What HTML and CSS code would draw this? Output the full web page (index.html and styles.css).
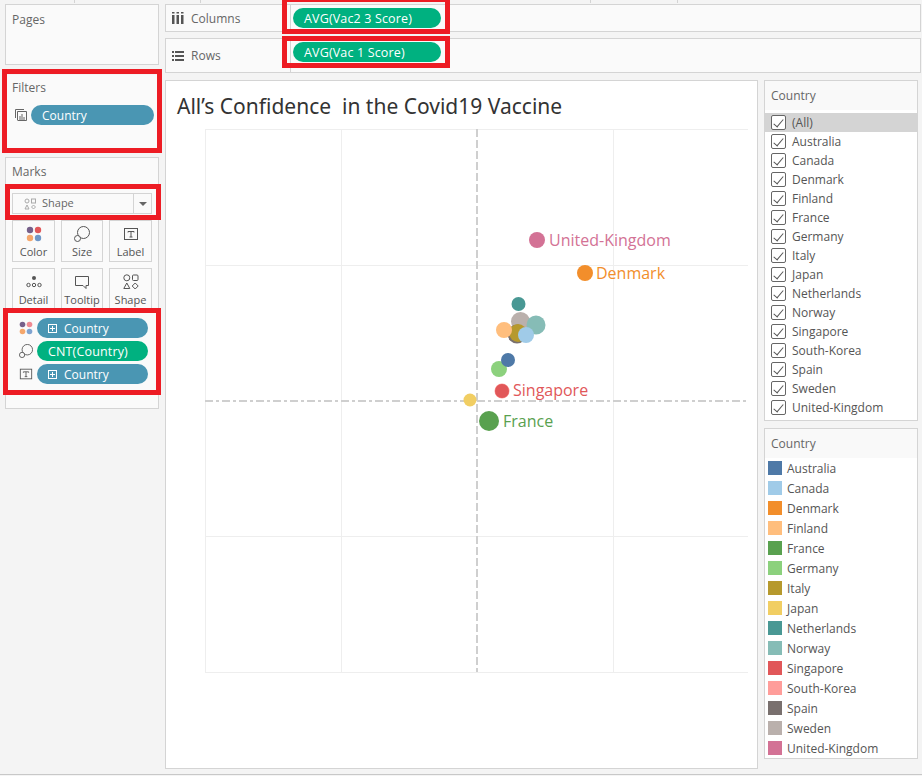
FILE: index.html
```html
<!DOCTYPE html>
<html lang="en">
<head>
    <meta charset="UTF-8">
    <title>All's Confidence in the Covid19 Vaccine</title>
    <link rel="stylesheet" href="styles.css">
</head>
<body>
    <div class="workspace">
        <div class="left-col">
            <div class="card pages">
                <div class="card-title">Pages</div>
            </div>
            <div class="card filters">
                <div class="card-title">Filters</div>
                <div class="filter-row">
                    <svg class="filter-icon" width="12" height="12" viewBox="0 0 12 12" fill="none" stroke="#666"><path d="M.5 9V.5H9"/><path d="M2.5 11V2.5H11.5V11.5H2.5"/><path d="M5 11V7M7 11V5M9 11V8"/></svg>
                    <div class="pill blue filter-pill">Country</div>
                </div>
            </div>
            <div class="card marks">
                <div class="card-title">Marks</div>
                <div class="mark-type">
                    <svg width="12" height="12" viewBox="0 0 12 12" fill="none" stroke="#aaa"><circle cx="3" cy="3" r="2"/><rect x="7.5" y="1" width="4" height="4"/><path d="M3 7l2 4H1z"/><path d="M9.5 7l2 2-2 2-2-2z"/></svg>
                    <span class="mark-type-name">Shape</span>
                    <span class="mark-type-arrow"></span>
                </div>
                <div class="mark-grid">
                    <div class="mark-btn">
                        <svg width="16" height="16" viewBox="0 0 16 16"><circle cx="4" cy="4" r="3.2" fill="#76608a"/><circle cx="12" cy="4" r="3.2" fill="#e15759"/><circle cx="4" cy="12" r="3.2" fill="#f5a76c"/><circle cx="12" cy="12" r="3.2" fill="#6f97c8"/></svg>
                        <span>Color</span>
                    </div>
                    <div class="mark-btn">
                        <svg width="16" height="16" viewBox="0 0 16 16" fill="none" stroke="#555"><circle cx="9.5" cy="6.5" r="6"/><circle cx="3.5" cy="12.5" r="3" fill="#fafafa"/></svg>
                        <span>Size</span>
                    </div>
                    <div class="mark-btn">
                        <svg width="16" height="16" viewBox="0 0 16 16" fill="none" stroke="#555"><rect x="1.5" y="2.5" width="13" height="11"/><path d="M5 5.5h6M8 5.5v5.5M6.5 11h3M5 5.5v1M11 5.5v1"/></svg>
                        <span>Label</span>
                    </div>
                    <div class="mark-btn">
                        <svg width="16" height="16" viewBox="0 0 16 16" fill="none" stroke="#555"><circle cx="8" cy="4" r="2" fill="#555" stroke="none"/><circle cx="2.5" cy="11" r="1.7"/><circle cx="8" cy="11" r="1.7"/><circle cx="13.5" cy="11" r="1.7"/></svg>
                        <span>Detail</span>
                    </div>
                    <div class="mark-btn">
                        <svg width="16" height="16" viewBox="0 0 16 16" fill="none" stroke="#555"><path d="M1.5 2.5h13v9h-2.500v3l-3-3h-7.500z"/></svg>
                        <span>Tooltip</span>
                    </div>
                    <div class="mark-btn">
                        <svg width="16" height="16" viewBox="0 0 16 16" fill="none" stroke="#555"><circle cx="3.8" cy="3.8" r="3"/><rect x="9.5" y="1" width="5.5" height="5.500" rx="1"/><path d="M3.8 9l3 5.500h-6z"/><path d="M12.200 9l3 3-3 3-3-3z"/></svg>
                        <span>Shape</span>
                    </div>
                </div>
                <div class="mark-fields">
                    <div class="field-row">
                        <svg class="field-icon" width="16" height="16" viewBox="0 0 16 16"><circle cx="4" cy="4" r="3.2" fill="#76608a"/><circle cx="12" cy="4" r="3.2" fill="#f08a92"/><circle cx="4" cy="12" r="3.2" fill="#f5a76c"/><circle cx="12" cy="12" r="3.2" fill="#7fa3d0"/></svg>
                        <div class="pill blue"><span class="plus-box"></span>Country</div>
                    </div>
                    <div class="field-row">
                        <svg class="field-icon" width="16" height="16" viewBox="0 0 16 16" fill="none" stroke="#555"><circle cx="9.5" cy="6.5" r="6"/><circle cx="3.5" cy="12.5" r="3" fill="#fafafa"/></svg>
                        <div class="pill green">CNT(Country)</div>
                    </div>
                    <div class="field-row">
                        <svg class="field-icon" width="16" height="16" viewBox="0 0 16 16" fill="none" stroke="#555"><rect x="1.5" y="2.5" width="13" height="11"/><path d="M5 5.5h6M8 5.5v5.5M6.5 11h3M5 5.5v1M11 5.5v1"/></svg>
                        <div class="pill blue"><span class="plus-box"></span>Country</div>
                    </div>
                </div>
            </div>
        </div>

        <div class="mid-col">
            <div class="shelf shelf-columns">
                <div class="shelf-label">
                    <svg width="12" height="12" viewBox="0 0 12 12" fill="#555"><rect x="0" y="3" width="2.5" height="9"/><rect x="4.5" y="3" width="2.5" height="9"/><rect x="9" y="3" width="2.5" height="9"/><rect x="0" y="0" width="2.5" height="1.5"/><rect x="4.5" y="0" width="2.5" height="1.5"/><rect x="9" y="0" width="2.5" height="1.5"/></svg>
                    <span>Columns</span>
                </div>
                <div class="shelf-pills"><div class="pill green shelf-pill">AVG(Vac2 3 Score)</div></div>
            </div>
            <div class="shelf shelf-rows">
                <div class="shelf-label">
                    <svg width="12" height="12" viewBox="0 0 12 12" fill="#555"><rect x="3" y="1" width="9" height="2"/><rect x="3" y="5" width="9" height="2"/><rect x="3" y="9" width="9" height="2"/><rect x="0" y="1" width="2" height="2"/><rect x="0" y="5" width="2" height="2"/><rect x="0" y="9" width="2" height="2"/></svg>
                    <span>Rows</span>
                </div>
                <div class="shelf-pills"><div class="pill green shelf-pill">AVG(Vac 1 Score)</div></div>
            </div>
            <div class="chart-row">
                <div class="chart-card">
                    <h1 class="chart-title">All’s Confidence&nbsp; in the Covid19 Vaccine</h1>
                    <svg class="plot" width="592" height="640" viewBox="166 129 592 640">
                        <g stroke="#eeeeee" fill="none">
                            <path d="M205.5 129V672M341.5 129V672M613.5 129V672"/>
                            <path d="M205 129.5H748M205 265.5H748M205 536.5H748M205 672.5H748"/>
                        </g>
                        <g stroke="#cfcfcf" stroke-width="2" fill="none">
                            <path d="M477 129V672" stroke-dasharray="8 3"/>
                            <path d="M205 401H748" stroke-dasharray="8 3 3 3"/>
                        </g>
                        <circle cx="537" cy="240" r="8" fill="#d37295"/>
                        <circle cx="585" cy="273" r="8" fill="#f28e2b"/>
                        <circle cx="518.5" cy="304" r="7" fill="#499894"/>
                        <circle cx="520.5" cy="321.5" r="9.5" fill="#bab0ac"/>
                        <circle cx="536" cy="325" r="9.5" fill="#86bcb6"/>
                        <circle cx="517" cy="334" r="9.5" fill="#79706e"/>
                        <circle cx="518" cy="333" r="9" fill="#b6992d"/>
                        <circle cx="504" cy="330" r="8" fill="#ffbe7d"/>
                        <circle cx="526" cy="335" r="8" fill="#a0cbe8"/>
                        <circle cx="499" cy="369" r="8" fill="#8cd17d"/>
                        <circle cx="508" cy="360" r="7" fill="#4e79a7"/>
                        <circle cx="502" cy="391" r="7.5" fill="#ff9d9a"/>
                        <circle cx="502" cy="391" r="7" fill="#e15759"/>
                        <circle cx="470" cy="400" r="6.5" fill="#f1ce63"/>
                        <circle cx="489" cy="421" r="10" fill="#59a14f"/>
                        <text class="mark-label" x="549" y="246" fill="#d37295">United-Kingdom</text>
                        <text class="mark-label" x="596" y="279" fill="#f28e2b">Denmark</text>
                        <text class="mark-label" x="513" y="396" fill="#e15759">Singapore</text>
                        <text class="mark-label" x="503" y="427" fill="#59a14f">France</text>
                    </svg>
                </div>
                <div class="side-col">
                    <div class="side-card filter-card">
                        <div class="side-title">Country</div>
                        <ul class="check-list">
                            <li class="selected"><span class="check"></span>(All)</li>
                            <li><span class="check"></span>Australia</li>
                            <li><span class="check"></span>Canada</li>
                            <li><span class="check"></span>Denmark</li>
                            <li><span class="check"></span>Finland</li>
                            <li><span class="check"></span>France</li>
                            <li><span class="check"></span>Germany</li>
                            <li><span class="check"></span>Italy</li>
                            <li><span class="check"></span>Japan</li>
                            <li><span class="check"></span>Netherlands</li>
                            <li><span class="check"></span>Norway</li>
                            <li><span class="check"></span>Singapore</li>
                            <li><span class="check"></span>South-Korea</li>
                            <li><span class="check"></span>Spain</li>
                            <li><span class="check"></span>Sweden</li>
                            <li><span class="check"></span>United-Kingdom</li>
                        </ul>
                    </div>
                    <div class="side-card legend-card">
                        <div class="side-title">Country</div>
                        <ul class="legend-list">
                            <li><span class="swatch c-australia"></span>Australia</li>
                            <li><span class="swatch c-canada"></span>Canada</li>
                            <li><span class="swatch c-denmark"></span>Denmark</li>
                            <li><span class="swatch c-finland"></span>Finland</li>
                            <li><span class="swatch c-france"></span>France</li>
                            <li><span class="swatch c-germany"></span>Germany</li>
                            <li><span class="swatch c-italy"></span>Italy</li>
                            <li><span class="swatch c-japan"></span>Japan</li>
                            <li><span class="swatch c-netherlands"></span>Netherlands</li>
                            <li><span class="swatch c-norway"></span>Norway</li>
                            <li><span class="swatch c-singapore"></span>Singapore</li>
                            <li><span class="swatch c-korea"></span>South-Korea</li>
                            <li><span class="swatch c-spain"></span>Spain</li>
                            <li><span class="swatch c-sweden"></span>Sweden</li>
                            <li><span class="swatch c-uk"></span>United-Kingdom</li>
                        </ul>
                    </div>
                </div>
            </div>
        </div>

        <!-- red annotation boxes -->
        <div class="red-box red-columns"></div>
        <div class="red-box red-rows"></div>
        <div class="red-box red-filters"></div>
        <div class="red-box red-marktype"></div>
        <div class="red-box red-fields"></div>
    </div>
</body>
</html>
```

FILE: styles.css
```css
* {
    box-sizing: border-box;
}
html, body {
    margin: 0;
    height: 776px;
    overflow: hidden;
}
body {
    font-family: "Open Sans", "Noto Sans", sans-serif;
    font-size: 12px;
    color: #555;
    background-color: #f4f4f4;
}
.workspace {
    position: relative;
    display: flex;
    height: 775px;
    padding: 4px 1px 0 5px;
    border-bottom: 1px solid #c8c8c8;
    /* little ruler ticks along the top edge */
    background-image:
        linear-gradient(#d4d4d4, #d4d4d4),
        linear-gradient(#d4d4d4, #d4d4d4),
        linear-gradient(#d4d4d4, #d4d4d4),
        linear-gradient(#d4d4d4, #d4d4d4);
    background-size: 1px 3px;
    background-repeat: no-repeat;
    background-position: 74px 0, 200px 0, 590px 0, 677px 0;
}
.left-col {
    width: 154px;
    margin-right: 6px;
    display: flex;
    flex-direction: column;
    flex-shrink: 0;
}
.card {
    background: #fafafa;
    border: 1px solid #d4d4d4;
    padding: 0 6px;
}
.card-title {
    height: 16px;
    line-height: 16px;
    color: #666;
}
.pages {
    height: 61px;
    padding-top: 7px;
}
.filters {
    height: 76px;
    margin-top: 10px;
    padding: 5px 5px 0 7px;
    border: none;
}
.filter-row {
    display: flex;
    align-items: center;
    margin-top: 9px;
    padding-left: 3px;
}
.filter-icon {
    margin-right: 4px;
    flex-shrink: 0;
}
.filter-pill {
    width: 123px;
    flex-shrink: 0;
}
.marks {
    height: 252px;
    margin-top: 6px;
    padding-top: 6px;
}
.pill {
    height: 20px;
    line-height: 19px;
    border-radius: 10px;
    color: #fff;
    font-weight: 500;
    padding-left: 11px;
    white-space: nowrap;
    display: flex;
    align-items: center;
}
.blue {
    background-color: #4a96b3;
}
.green {
    background-color: #00b180;
    font-size: 12.5px;
    letter-spacing: 0.15px;
}
.mark-type {
    display: flex;
    align-items: center;
    height: 21px;
    margin-top: 13px;
    width: 140px;
    padding-left: 11px;
    border: 1px solid #d4d4d4;
    color: #666;
}
.mark-type-name {
    margin-left: 6px;
    flex: 1;
    font-size: 11px;
    line-height: 17px;
    padding-bottom: 2px;
}
.mark-type-arrow {
    width: 18px;
    height: 19px;
    border-left: 1px solid #d4d4d4;
    position: relative;
}
.mark-type-arrow::after {
    content: "";
    position: absolute;
    left: 5px;
    top: 8px;
    border: 4px solid transparent;
    border-top: 4px solid #666;
}
.mark-grid {
    display: grid;
    grid-template-columns: 43px 42px 43px;
    grid-auto-rows: 42px;
    column-gap: 6px;
    row-gap: 6px;
    margin-top: 6px;
}
.mark-btn {
    border: 1px solid #d4d4d4;
    display: flex;
    flex-direction: column;
    align-items: center;
    padding-top: 5px;
    font-size: 11px;
    color: #555;
}
.mark-btn span {
    line-height: 15px;
    margin-top: 2px;
}
.mark-fields {
    margin-top: 8px;
    display: flex;
    flex-direction: column;
    gap: 3px;
}
.field-row {
    display: flex;
    align-items: center;
    padding-left: 7px;
}
.field-icon {
    margin-right: 4px;
    width: 14px;
    height: 14px;
}
.field-row .pill {
    width: 111px;
}
.plus-box {
    width: 9px;
    height: 9px;
    margin-right: 7px;
    border: 1px solid #fff;
    flex-shrink: 0;
    background: linear-gradient(#fff, #fff) center / 5px 1px no-repeat, linear-gradient(#fff, #fff) center / 1px 5px no-repeat;
}
.mid-col {
    flex: 1;
    display: flex;
    flex-direction: column;
}
.shelf {
    display: flex;
    background: #fafafa;
    border: 1px solid #d4d4d4;
}
.shelf-columns {
    height: 28px;
}
.shelf-rows {
    height: 35px;
    margin-top: 6px;
}
.shelf-label {
    width: 125px;
    display: flex;
    align-items: center;
    padding-left: 6px;
    border-right: 1px solid #d4d4d4;
    color: #666;
}
.shelf-label svg {
    margin-right: 7px;
}
.shelf-pills {
    padding: 3px 0 0 2px;
}
.shelf-pill {
    width: 148px;
}
.chart-row {
    display: flex;
    margin-top: 7px;
    flex: 1;
}
.chart-card {
    width: 593px;
    height: 689px;
    background: #fff;
    border: 1px solid #d4d4d4;
}
.chart-title {
    margin: 0;
    padding: 12px 0 0 11px;
    font-family: "Noto Sans", "Open Sans", sans-serif;
    font-size: 21px;
    line-height: 27px;
    font-weight: 400;
    color: #333;
}
.plot {
    display: block;
    margin-top: 9px;
}
.mark-label {
    font-size: 16px;
    font-family: "Open Sans", "Noto Sans", sans-serif;
}
.side-col {
    width: 154px;
    margin-left: 6px;
    display: flex;
    flex-direction: column;
}
.side-card {
    background: #fff;
    border: 1px solid #d4d4d4;
}
.filter-card {
    height: 341px;
}
.legend-card {
    height: 331px;
    margin-top: 7px;
}
.side-title {
    height: 29px;
    line-height: 29px;
    padding-left: 6px;
    background: #f9f9f9;
    color: #666;
}
.check-list, .legend-list {
    list-style: none;
    margin: 0;
    padding: 0;
}
.check-list {
    margin-top: 3px;
}
.check-list li {
    display: flex;
    align-items: center;
    height: 19px;
    padding-left: 6px;
    color: #555;
    white-space: nowrap;
}
.check-list .selected {
    background: #d4d4d4;
}
.check {
    position: relative;
    width: 15px;
    height: 15px;
    margin-right: 6px;
    background: #fff;
    border: 1px solid #666;
    border-radius: 2px;
    flex-shrink: 0;
}
.check::after {
    content: "";
    position: absolute;
    left: 4px;
    top: 1px;
    width: 4px;
    height: 9px;
    border: solid #555;
    border-width: 0 1.5px 1.5px 0;
    transform: rotate(40deg);
}
.legend-list li {
    display: flex;
    align-items: center;
    height: 20px;
    padding-left: 3px;
    color: #555;
    white-space: nowrap;
}
.swatch {
    width: 14px;
    height: 14px;
    margin-right: 5px;
    flex-shrink: 0;
}
.c-australia { background: #4e79a7; }
.c-canada { background: #a0cbe8; }
.c-denmark { background: #f28e2b; }
.c-finland { background: #ffbe7d; }
.c-france { background: #59a14f; }
.c-germany { background: #8cd17d; }
.c-italy { background: #b6992d; }
.c-japan { background: #f1ce63; }
.c-netherlands { background: #499894; }
.c-norway { background: #86bcb6; }
.c-singapore { background: #e15759; }
.c-korea { background: #ff9d9a; }
.c-spain { background: #79706e; }
.c-sweden { background: #bab0ac; }
.c-uk { background: #d37295; }
.red-box {
    position: absolute;
    border: 5px solid #ed1c24;
    pointer-events: none;
}
.red-columns {
    left: 282px;
    top: -3px;
    width: 168px;
    height: 37px;
}
.red-rows {
    left: 282px;
    top: 36px;
    width: 168px;
    height: 32px;
}
.red-filters {
    left: 2px;
    top: 69px;
    width: 160px;
    height: 84px;
}
.red-marktype {
    left: 5px;
    top: 184px;
    width: 156px;
    height: 36px;
}
.red-fields {
    left: 3px;
    top: 308px;
    width: 158px;
    height: 87px;
}
```
